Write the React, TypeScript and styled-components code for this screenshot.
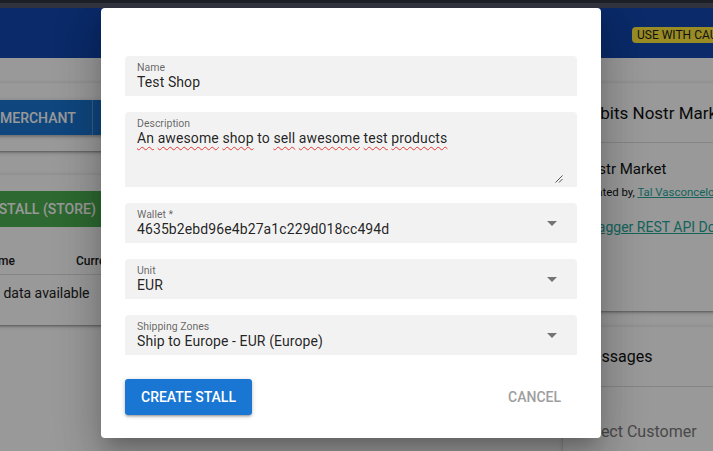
import React from "react";
import styled, { createGlobalStyle } from "styled-components";

const GlobalStyle = createGlobalStyle`
  html, body { margin: 0; padding: 0; width: 713px; height: 451px; overflow: hidden; background: #fff; }
  body { font-family: Roboto, "Liberation Sans", Arial, sans-serif; -webkit-font-smoothing: antialiased; }
  * { box-sizing: border-box; }
`;

const Screen = styled.div`
  width: 713px;
  height: 451px;
  display: flex;
  flex-direction: column;
  overflow: hidden;
`;

const TopStrip = styled.div`
  flex: none;
  height: 8px;
  background: #30323e;
  border-top: 3px solid #1d1f27;
`;

const Page = styled.div`
  position: relative;
  flex: 1;
  overflow: hidden;
  background: #ffffff;
`;

const Header = styled.header`
  height: 50px;
  background: #1246b0;
  display: flex;
  align-items: center;
`;

const HeaderSpacer = styled.div`
  flex: 1;
`;

const BadgeSlot = styled.div`
  flex: none;
  width: 81px;
`;

const Badge = styled.span`
  display: inline-block;
  white-space: nowrap;
  background: #ffe93f;
  color: #1c1c1c;
  font-size: 12px;
  line-height: 12px;
  padding: 2px 5px;
  border-radius: 4px;
`;

const Content = styled.div`
  display: grid;
  grid-template-columns: 611px 200px;
  column-gap: 16px;
  margin-left: -64px;
  padding-top: 25px;
  align-items: start;
`;

const Column = styled.div`
  display: flex;
  flex-direction: column;
  gap: ${(p: { $gap: number }) => p.$gap}px;
`;

const Card = styled.div<{ $pad?: string; $h?: number }>`
  background: #fff;
  border-radius: 4px;
  padding: ${(p) => p.$pad ?? "0"};
  height: ${(p) => (p.$h ? `${p.$h}px` : "auto")};
  box-shadow: 0 1px 5px rgba(0, 0, 0, 0.2), 0 2px 2px rgba(0, 0, 0, 0.14),
    0 3px 1px -2px rgba(0, 0, 0, 0.12);
`;

const ButtonGroup = styled.div`
  display: inline-flex;
  border-radius: 3px;
  overflow: hidden;
  box-shadow: 0 1px 5px rgba(0, 0, 0, 0.2), 0 2px 2px rgba(0, 0, 0, 0.14);
`;

const GroupButton = styled.div<{ $divided?: boolean }>`
  height: 35px;
  padding: 0 16px;
  display: flex;
  align-items: center;
  background: #1976d2;
  color: #fff;
  font-size: 14px;
  font-weight: 500;
  text-transform: uppercase;
  border-left: ${(p) => (p.$divided ? "1px solid rgba(255,255,255,0.3)" : "none")};
`;

const GreenButton = styled.div`
  align-self: flex-start;
  margin-left: 13px;
  height: 36px;
  padding: 0 16px;
  display: flex;
  align-items: center;
  background: #4caf50;
  color: #fff;
  font-size: 14px;
  font-weight: 500;
  text-transform: uppercase;
  border-radius: 3px;
  white-space: nowrap;
`;

const TableHead = styled.div`
  margin-top: 20px;
  height: 28px;
  padding-left: 31px;
  display: flex;
  align-items: center;
  border-bottom: 1px solid rgba(0, 0, 0, 0.12);
`;

const Th = styled.div<{ $w: number }>`
  width: ${(p) => p.$w}px;
  padding: 0 16px;
  font-size: 12px;
  font-weight: 500;
  color: #1a1a1a;
  white-space: nowrap;
`;

const NoDataRow = styled.div`
  height: 36px;
  padding-left: 46px;
  display: flex;
  align-items: center;
  font-size: 14px;
  color: #222;
`;

const CardTitle = styled.div<{ $size: number }>`
  height: 60px;
  padding: 0 16px;
  display: flex;
  align-items: center;
  font-size: ${(p) => p.$size}px;
  color: #111;
  white-space: nowrap;
  border-bottom: 1px solid rgba(0, 0, 0, 0.12);
`;

const CardBody = styled.div`
  padding: 16px;
  display: flex;
  flex-direction: column;
  white-space: nowrap;
`;

const InfoTitle = styled.div`
  font-size: 15px;
  line-height: 20px;
  color: #111;
`;

const InfoCredit = styled.div`
  margin-top: 5px;
  font-size: 11.4px;
  line-height: 16px;
  color: #111;
`;

const Link = styled.span<{ $size: number }>`
  color: #26a69a;
  text-decoration: underline;
  font-size: ${(p) => p.$size}px;
`;

const DocsLink = styled.div`
  margin-top: 17px;
  line-height: 20px;
`;

const Placeholder = styled.div`
  height: 56px;
  display: flex;
  align-items: center;
  font-size: 16px;
  color: #7a7a7a;
`;

const Backdrop = styled.div`
  position: absolute;
  inset: 0;
  background: rgba(0, 0, 0, 0.4);
`;

const Dialog = styled.div`
  position: absolute;
  top: 0;
  left: 101px;
  width: 500px;
  height: 430px;
  background: #fff;
  border-radius: 4px;
  padding: 48px 24px 23px;
  display: flex;
  flex-direction: column;
  gap: 16px;
  box-shadow: 0 11px 15px -7px rgba(0, 0, 0, 0.2), 0 24px 38px 3px rgba(0, 0, 0, 0.14),
    0 9px 46px 8px rgba(0, 0, 0, 0.12);
`;

const Field = styled.div<{ $h: number; $col?: boolean }>`
  flex: none;
  height: ${(p) => p.$h}px;
  background: #f2f2f2;
  border-radius: 4px 4px 0 0;
  padding: 0 13px 0 12px;
  display: flex;
  flex-direction: ${(p) => (p.$col ? "column" : "row")};
`;

const FieldBody = styled.div`
  flex: 1;
  padding-top: 6px;
  min-width: 0;
`;

const FieldLabel = styled.div`
  font-size: 10.5px;
  line-height: 12px;
  color: rgba(0, 0, 0, 0.6);
`;

const FieldValue = styled.div`
  font-size: 14px;
  line-height: 16px;
  letter-spacing: 0.1px;
  color: rgba(0, 0, 0, 0.87);
  white-space: nowrap;
`;

const Misspelled = styled.span`
  text-decoration: underline wavy #e53935;
  text-decoration-thickness: 1px;
  text-underline-offset: 3px;
  text-decoration-skip-ink: none;
`;

const ResizeHandle = styled.svg`
  align-self: flex-end;
  margin: auto 1px 4px 0;
  flex: none;
`;

const DropArrow = styled.svg`
  align-self: center;
  flex: none;
`;

const Actions = styled.div`
  margin-top: 8px;
  display: flex;
  justify-content: space-between;
  align-items: center;
`;

const Btn = styled.button<{ $primary?: boolean }>`
  height: 36px;
  padding: 0 16px;
  border: none;
  border-radius: 3px;
  font-family: inherit;
  font-size: 14px;
  font-weight: 500;
  text-transform: uppercase;
  background: ${(p) => (p.$primary ? "#1976d2" : "transparent")};
  color: ${(p) => (p.$primary ? "#fff" : "#9e9e9e")};
  box-shadow: ${(p) =>
    p.$primary
      ? "0 1px 5px rgba(0,0,0,0.2), 0 2px 2px rgba(0,0,0,0.14), 0 3px 1px -2px rgba(0,0,0,0.12)"
      : "none"};
`;

const Arrow = () => (
  <DropArrow width="24" height="24" viewBox="0 0 24 24">
    <path d="M7 10l5 5 5-5z" fill="#757575" />
  </DropArrow>
);

const SelectField = ({ label, value }: { label: string; value: string }) => (
  <Field $h={40}>
    <FieldBody>
      <FieldLabel>{label}</FieldLabel>
      <FieldValue>{value}</FieldValue>
    </FieldBody>
    <Arrow />
  </Field>
);

export default function App() {
  return (
    <>
      <GlobalStyle />
      <Screen>
        <TopStrip />
        <Page>
          <Header>
            <HeaderSpacer />
            <BadgeSlot>
              <Badge>USE WITH CAUTION - NOSTR MARKET IS STILL IN BETA</Badge>
            </BadgeSlot>
          </Header>
          <Content>
            <Column $gap={24}>
              <Card $pad="17px 0 16px 48px">
                <ButtonGroup>
                  <GroupButton>Merchant</GroupButton>
                  <GroupButton $divided>Stalls</GroupButton>
                </ButtonGroup>
              </Card>
              <Card $pad="16px 0 14px 0" $h={150}>
                <Column $gap={0}>
                  <GreenButton>New Stall (Store)</GreenButton>
                  <TableHead>
                    <Th $w={93}>Name</Th>
                    <Th $w={120}>Currency</Th>
                    <Th $w={120}>Description</Th>
                  </TableHead>
                  <NoDataRow>No data available</NoDataRow>
                </Column>
              </Card>
            </Column>
            <Column $gap={16}>
              <Card $h={228}>
                <CardTitle $size={17}>LNbits Nostr Market Extension</CardTitle>
                <CardBody>
                  <InfoTitle>Nostr Market</InfoTitle>
                  <InfoCredit>
                    Created by, <Link $size={11.4}>Tal Vasconcelos</Link>
                  </InfoCredit>
                  <DocsLink>
                    <Link $size={14}>Swagger REST API Documentation</Link>
                  </DocsLink>
                </CardBody>
              </Card>
              <Card>
                <CardTitle $size={16}>Messages</CardTitle>
                <CardBody>
                  <Placeholder>Select Customer</Placeholder>
                </CardBody>
              </Card>
            </Column>
          </Content>
          <Backdrop />
          <Dialog>
            <Field $h={40}>
              <FieldBody>
                <FieldLabel>Name</FieldLabel>
                <FieldValue>Test Shop</FieldValue>
              </FieldBody>
            </Field>
            <Field $h={75} $col>
              <FieldBody>
                <FieldLabel>Description</FieldLabel>
                <FieldValue>
                  <Misspelled>An</Misspelled> <Misspelled>awesome</Misspelled>{" "}
                  <Misspelled>shop</Misspelled> to <Misspelled>sell</Misspelled>{" "}
                  <Misspelled>awesome</Misspelled> <Misspelled>test</Misspelled>{" "}
                  <Misspelled>products</Misspelled>
                </FieldValue>
              </FieldBody>
              <ResizeHandle width="8" height="8" viewBox="0 0 8 8">
                <path d="M7.5 0.5L0.5 7.5M7.5 4L4 7.5" stroke="#555" strokeWidth="1" fill="none" />
              </ResizeHandle>
            </Field>
            <SelectField label="Wallet *" value="4635b2ebd96e4b27a1c229d018cc494d" />
            <SelectField label="Unit" value="EUR" />
            <SelectField label="Shipping Zones" value="Ship to Europe - EUR (Europe)" />
            <Actions>
              <Btn $primary>Create Stall</Btn>
              <Btn>Cancel</Btn>
            </Actions>
          </Dialog>
        </Page>
      </Screen>
    </>
  );
}
